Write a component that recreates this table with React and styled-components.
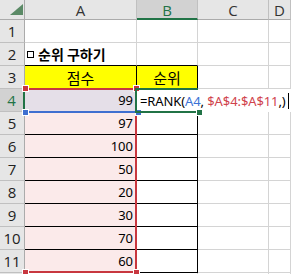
import React from 'react';
import styled, { createGlobalStyle } from 'styled-components';

const GlobalStyle = createGlobalStyle`
  html, body { margin: 0; padding: 0; background: #fff; }
  body { font-family: "Noto Sans", "Noto Sans CJK KR", sans-serif; }
`;

const GREEN = '#217346';
const GRID = '#d4d4d4';
const RED = '#c8373f';
const BLUE = '#3f6fd0';

const Sheet = styled.div`
  display: grid;
  grid-template-columns: 25px 112px 61px 71px 1fr;
  grid-template-rows: 20px repeat(12, 23px);
  width: 291px;
  height: 274px;
  overflow: hidden;
  background: #fff;
`;

const Corner = styled.div`
  grid-row: 1;
  grid-column: 1;
  background: #e6e6e6;
  border-right: 1px solid #ababab;
  border-bottom: 1px solid #ababab;
  display: flex;
  align-items: flex-end;
  justify-content: flex-end;
  padding: 0 1px 4px 0;
`;

const ColHead = styled.div`
  grid-row: 1;
  grid-column: ${p => p.c};
  box-sizing: border-box;
  background: ${p => (p.active ? '#d2d2d2' : '#e6e6e6')};
  border-right: 1px solid #c0c0c0;
  border-bottom: ${p => (p.active ? `2px solid ${GREEN}` : '1px solid #ababab')};
  color: ${p => (p.active ? GREEN : '#333')};
  font: 15px "Open Sans", "Liberation Sans", sans-serif;
  display: flex;
  align-items: center;
  justify-content: center;
  padding-top: ${p => (p.active ? '1px' : '0')};
`;

const RowHead = styled.div`
  grid-row: ${p => p.r};
  grid-column: 1;
  box-sizing: border-box;
  background: ${p => (p.active ? '#d2d2d2' : '#e6e6e6')};
  border-right: ${p => (p.active ? `2px solid ${GREEN}` : '1px solid #ababab')};
  border-bottom: 1px solid #c0c0c0;
  color: ${p => (p.active ? GREEN : '#222')};
  font: 15px "Open Sans", "Liberation Sans", sans-serif;
  display: flex;
  align-items: center;
  justify-content: center;
`;

const Cell = styled.div`
  grid-row: ${p => p.r};
  grid-column: ${p => p.c};
  box-sizing: border-box;
  min-width: 0;
  background: ${p => p.fill || '#fff'};
  border-right: 1px solid ${p => (p.boxed ? '#000' : GRID)};
  border-bottom: 1px solid ${p => (p.boxed || p.ruled ? '#000' : GRID)};
  font: 13px "Noto Sans", "Noto Sans CJK KR", sans-serif;
  color: #000;
  display: flex;
  align-items: center;
  justify-content: ${p => (p.align === 'right' ? 'flex-end' : p.align === 'center' ? 'center' : 'flex-start')};
  padding: 0 3px;
  white-space: nowrap;
  overflow: visible;
`;

const Label = styled.span`
  font: 15px "Noto Sans CJK KR", sans-serif;
`;

const Title = styled.span`
  font: 700 14px "Noto Sans CJK KR", sans-serif;
  display: flex;
  align-items: center;
  gap: 4px;
  margin-left: -1px;
`;

const Bullet = styled.span`
  display: inline-block;
  width: 5px;
  height: 5px;
  border: 1px solid #000;
  font-size: 0;
  overflow: hidden;
`;

const Editor = styled.div`
  grid-column: 3 / -1;
  grid-row: 5;
  background: #fff;
  display: flex;
  align-items: center;
  padding-left: 3px;
  font: 13px "Noto Sans", sans-serif;
  white-space: nowrap;
  color: #000;
`;

const Formula = styled.span`
  letter-spacing: -0.1px;
`;

const Ref = styled.span`
  color: ${p => p.color};
`;

const Caret = styled.span`
  display: inline-block;
  width: 1px;
  height: 16px;
  background: #000;
  margin-left: 2px;
`;

const Frame = styled.div`
  position: relative;
  pointer-events: none;
  grid-column: ${p => p.col};
  grid-row: ${p => p.row};
`;

const RangeFrame = styled(Frame)`
  margin-top: -1px;
  border-top: 2px solid ${RED};
  border-right: 2px solid ${RED};
  border-bottom: 2px solid ${RED};
`;

const RefFrame = styled(Frame)`
  margin-bottom: -1px;
  border-bottom: 2px solid ${BLUE};
`;

const ActiveFrame = styled(Frame)`
  margin: -1px 0 -1px -2px;
  border-top: 2px solid ${GREEN};
  border-left: 2px solid ${GREEN};
  border-bottom: 2px solid ${GREEN};
`;

const Handle = styled.span`
  position: absolute;
  width: 5px;
  height: 5px;
  background: ${p => p.color};
  box-shadow: 0 0 0 1px #fff;
  left: ${p => (p.x === 'l' ? '-2px' : 'auto')};
  right: ${p => (p.x === 'r' ? '-4px' : 'auto')};
  top: ${p => (p.y === 't' ? '-4px' : 'auto')};
  bottom: ${p => (p.y === 'b' ? '-4px' : 'auto')};
`;

const scores = [99, 97, 100, 50, 20, 30, 70, 60];

const App = () => {
  const cells = [];
  for (let r = 1; r <= 12; r++) {
    const g = r + 1;
    cells.push(<RowHead key={'h' + r} r={g} active={r === 4}>{r}</RowHead>);
    if (r === 2) {
      cells.push(
        <Cell key="a2" r={g} c={2} ruled>
          <Title><Bullet>□</Bullet>순위 구하기</Title>
        </Cell>,
        <Cell key="b2" r={g} c={3} ruled />
      );
    } else if (r === 3) {
      cells.push(
        <Cell key="a3" r={g} c={2} boxed fill="#ffff00" align="center"><Label>점수</Label></Cell>,
        <Cell key="b3" r={g} c={3} boxed fill="#ffff00" align="center"><Label>순위</Label></Cell>
      );
    } else if (r >= 4 && r <= 11) {
      cells.push(
        <Cell key={'a' + r} r={g} c={2} boxed fill={r === 4 ? '#e5dfe8' : '#fbeaea'} align="right">
          {scores[r - 4]}
        </Cell>
      );
      if (r > 4) cells.push(<Cell key={'b' + r} r={g} c={3} boxed />);
    } else {
      cells.push(<Cell key={'a' + r} r={g} c={2} />, <Cell key={'b' + r} r={g} c={3} />);
    }
    if (r !== 4) {
      cells.push(<Cell key={'c' + r} r={g} c={4} />, <Cell key={'d' + r} r={g} c={5} />);
    }
  }

  return (
    <>
      <GlobalStyle />
      <Sheet>
        <Corner>
          <svg width="13" height="11" viewBox="0 0 13 11">
            <polygon points="0,11 13,11 13,0" fill="#5b8a66" />
          </svg>
        </Corner>
        <ColHead c={2}>A</ColHead>
        <ColHead c={3} active>B</ColHead>
        <ColHead c={4}>C</ColHead>
        <ColHead c={5}>D</ColHead>
        {cells}
        <Editor>
          <Formula>
            =RANK(<Ref color="#3c73d6">A4</Ref>, <Ref color="#d0434c">$A$4:$A$11</Ref>,)
          </Formula>
          <Caret />
        </Editor>
        <RangeFrame col={2} row="5 / 13">
          <Handle color={RED} x="l" y="t" />
          <Handle color={RED} x="r" y="t" />
          <Handle color={RED} x="l" y="b" />
          <Handle color={RED} x="r" y="b" />
        </RangeFrame>
        <RefFrame col={2} row={5}>
          <Handle color={BLUE} x="l" y="b" />
          <Handle color={BLUE} x="r" y="b" />
        </RefFrame>
        <ActiveFrame col={3} row={5}>
          <Handle color={GREEN} x="r" y="b" />
        </ActiveFrame>
      </Sheet>
    </>
  );
};

export default App;
